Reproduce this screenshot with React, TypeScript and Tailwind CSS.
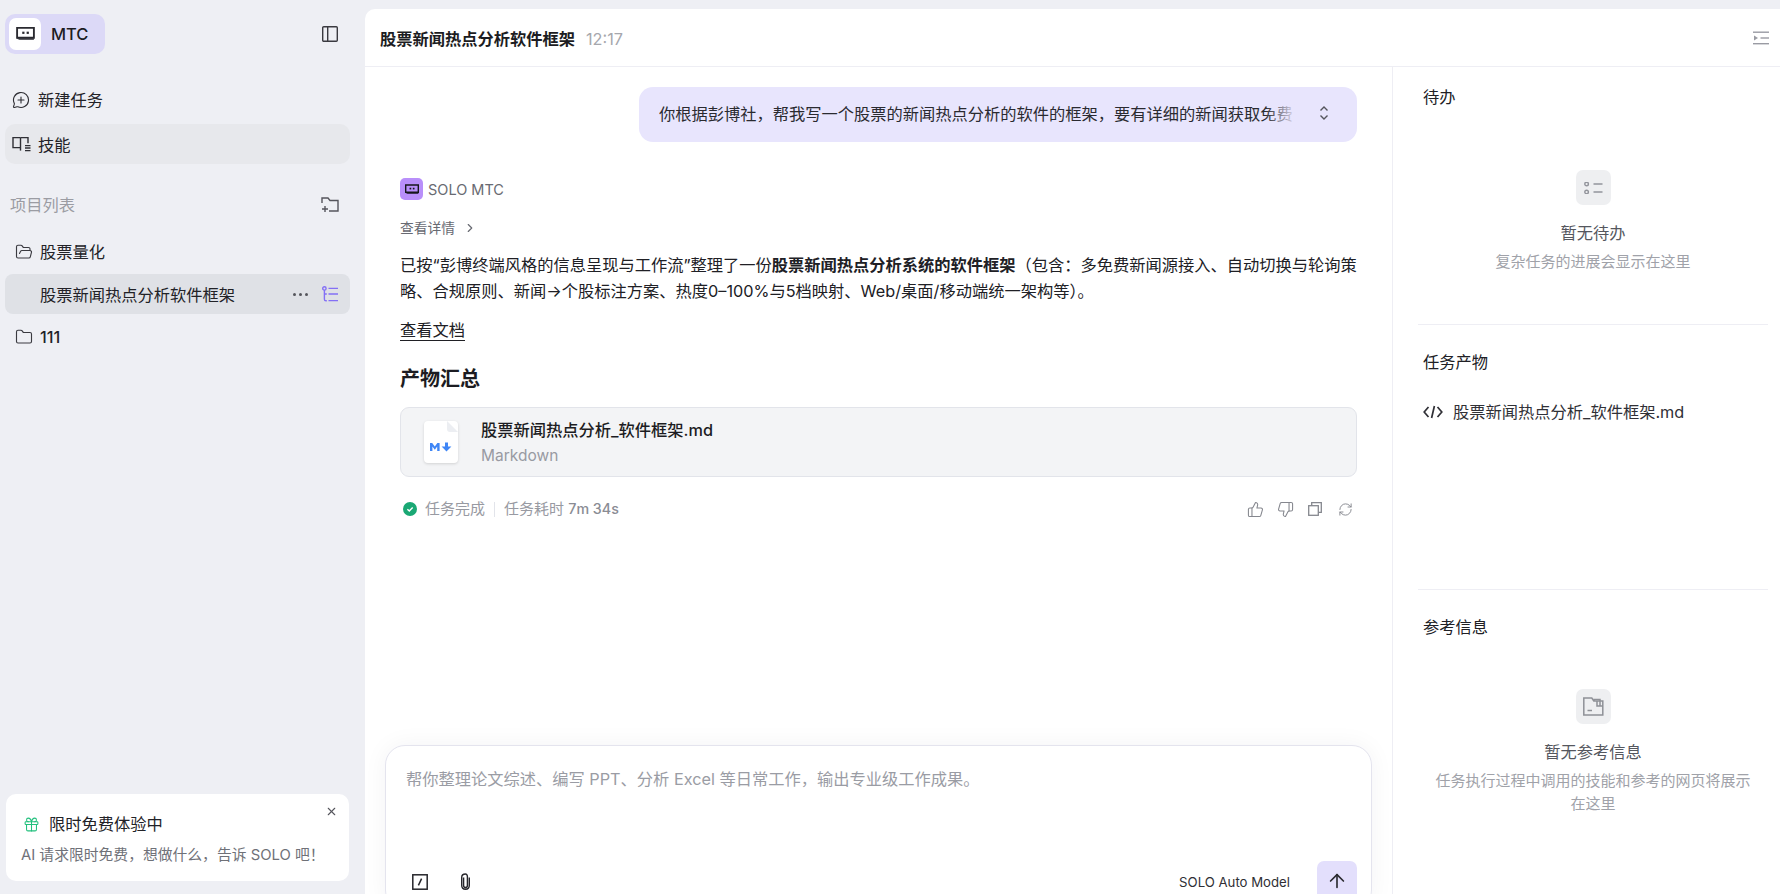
import {
  ArrowUp,
  ChevronRight,
  Folder,
  FolderOpen,
  Gift,
  MessageCirclePlus,
  RefreshCw,
  ThumbsDown,
  ThumbsUp,
  X,
} from "lucide-react";

/* ── Inline icons the packages don't have ── */

function RobotMark({ className }: { className?: string }) {
  return (
    <svg viewBox="0 0 20 15" className={className}>
      <path d="M1 1h18v10.5H1z" fill="none" stroke="currentColor" strokeWidth="2" />
      <path d="M1 11h18v3H3.5L1 12.5z" fill="currentColor" opacity="0.75" />
      <rect x="6.5" y="5" width="2.4" height="2.4" fill="currentColor" />
      <rect x="11.2" y="5" width="2.4" height="2.4" fill="currentColor" />
    </svg>
  );
}

function PanelIcon() {
  return (
    <svg viewBox="0 0 16 16" className="w-[16px] h-[16px] text-[#3a3a40]" fill="none" stroke="currentColor" strokeWidth="1.4">
      <rect x="0.7" y="0.7" width="14.6" height="14.6" rx="1" />
      <path d="M5.7 1v14" />
    </svg>
  );
}

function SkillIcon() {
  return (
    <svg viewBox="0 0 19 16" className="w-[19px] h-[16px] text-[#2f2f35]" fill="none" stroke="currentColor" strokeWidth="1.4">
      <path d="M8.5 1.6H1v10h7.5" />
      <path d="M8.5 1.6H16v5.6" />
      <path d="M8.5 1.6v13" />
      <path d="M13 9.6h5.5M13 12h5.5M13 14.6h5.5" />
    </svg>
  );
}

function FolderPlusIcon() {
  return (
    <svg viewBox="0 0 18 16" className="w-[18px] h-[16px] text-[#55555c]" fill="none" stroke="currentColor" strokeWidth="1.4">
      <path d="M1 6V1h6l2 2.5h8V14H8" />
      <path d="M4 9v6M1 12h6" />
    </svg>
  );
}

function TreeIcon() {
  return (
    <svg viewBox="0 0 16 16" className="w-[16px] h-[16px] text-[#8470f5]" fill="none" stroke="currentColor" strokeWidth="1.4">
      <circle cx="2.4" cy="2.4" r="1.7" />
      <path d="M2.4 4v9.2c0 1 .5 1.6 1.6 1.6h.8M2.4 8h2.4M6.5 2.4H16M6.5 8H16M6.5 14.6H16" />
    </svg>
  );
}

function CollapseIcon() {
  return (
    <svg viewBox="0 0 16 14" className="w-[16px] h-[14px] text-[#9a9ba3]" fill="currentColor">
      <rect x="0" y="0.5" width="16" height="1.4" />
      <path d="M1 4.5 5 7 1 9.5z" />
      <rect x="7.5" y="6.3" width="8.5" height="1.4" />
      <rect x="0" y="12" width="16" height="1.4" />
    </svg>
  );
}

function UpDownIcon() {
  return (
    <svg viewBox="0 0 10 14" className="w-[10px] h-[14px] text-[#55555c]" fill="none" stroke="currentColor" strokeWidth="1.4">
      <path d="m1.5 4.6 3.5-3.5 3.5 3.5M1.5 9.4 5 12.9l3.5-3.5" />
    </svg>
  );
}

function CopyIcon() {
  return (
    <svg viewBox="0 0 14 14" className="w-[14px] h-[14px]" fill="none" stroke="currentColor" strokeWidth="1.3">
      <rect x="0.7" y="3.7" width="9.6" height="9.6" />
      <path d="M3.7 3.7V.7h9.6v9.6h-3" />
    </svg>
  );
}

function CodeIcon() {
  return (
    <svg viewBox="0 0 20 14" className="w-[20px] h-[14px] text-[#303036]" fill="none" stroke="currentColor" strokeWidth="1.7">
      <path d="M5.5 2 1.2 7l4.3 5M14.5 2l4.3 5-4.3 5M11.4 1 8.6 13" />
    </svg>
  );
}

function TodoIcon() {
  return (
    <svg viewBox="0 0 19 12" className="w-[19px] h-[12px] text-[#93959c]" fill="none" stroke="currentColor" strokeWidth="1.4">
      <circle cx="2.6" cy="2" r="1.8" />
      <circle cx="2.6" cy="10" r="1.8" />
      <path d="M9.5 2h9M9.5 10h9" />
    </svg>
  );
}

function RefFolderIcon() {
  return (
    <svg viewBox="0 0 21 19" className="w-[21px] h-[19px] text-[#8f9197]" fill="none" stroke="currentColor" strokeWidth="1.5">
      <path d="M.8 18V1h8l2 3h9v14z" />
      <path d="M11 4V2.5h6V9M14 4v5h6" />
      <path d="M4.5 13.5h4.5" />
    </svg>
  );
}

function MarkdownFile() {
  return (
    <div className="w-[34px] h-[42px] rounded-[4px] bg-white shadow-[0_1px_3px_rgba(0,0,0,0.14)]">
      <svg viewBox="0 0 34 42" className="w-[34px] h-[42px]">
        <path d="M23 0 34 11H26a3 3 0 0 1-3-3z" fill="#eceef2" />
        <path d="M6 30v-8h2.2l2.6 3.6 2.6-3.6h2.2v8h-2.4v-4.4l-2.4 3.2-2.4-3.2V30z" fill="#3f86f6" />
        <path d="M21 21.5h3v4h3.4l-4.9 5-4.9-5H21z" fill="#3f86f6" />
      </svg>
    </div>
  );
}

function SlashIcon() {
  return (
    <svg viewBox="0 0 16 16" className="w-[16px] h-[16px] text-[#26262b]" fill="none" stroke="currentColor" strokeWidth="1.5">
      <rect x="0.8" y="0.8" width="14.4" height="14.4" />
      <path d="m9.6 4.6-3.2 6.8" />
    </svg>
  );
}

function ClipIcon() {
  return (
    <svg viewBox="0 0 13 17" className="w-[13px] h-[17px] text-[#26262b]" fill="none" stroke="currentColor" strokeWidth="1.4">
      <path d="M4.6 4.5v8c0 1.2.8 2 1.9 2s1.9-.8 1.9-2V3.6C8.4 2 7.4 1 6.5 1 4.8 1 2.7 2 2.7 4.5v7.8c0 2.6 1.6 4 3.8 4s3.8-1.4 3.8-4V4.5" />
    </svg>
  );
}

function CheckBadge() {
  return (
    <svg viewBox="0 0 14 14" className="w-[14px] h-[14px]">
      <circle cx="7" cy="7" r="7" fill="#1aa874" />
      <path d="m4.4 7.2 1.9 1.8 3.4-3.6" fill="none" stroke="#fff" strokeWidth="1.4" />
    </svg>
  );
}

/* ── Sidebar ── */

function Sidebar() {
  return (
    <aside className="w-[365px] shrink-0 h-full flex flex-col bg-[#eeeff4] text-[#222227]">
      <div className="flex items-center justify-between mt-[14px] pl-[5px] pr-[27px]">
        <div className="w-[100px] h-[40px] rounded-[10px] bg-[#dcd9f7] flex items-center pl-[4px] gap-[10px]">
          <div className="w-[32px] h-[32px] rounded-[7px] bg-white flex items-center justify-center">
            <RobotMark className="w-[19px] h-[14px] text-[#2a2a30]" />
          </div>
          <span className="text-[16.5px] font-medium text-[#1c1c22]">MTC</span>
        </div>
        <PanelIcon />
      </div>

      <nav className="mt-[26px] pl-[5px] pr-[15px] flex flex-col gap-[4px]">
        <div className="h-[40px] rounded-[10px] flex items-center pl-[7px] gap-[8px]">
          <MessageCirclePlus size={18} strokeWidth={1.5} className="text-[#2f2f35]" />
          <span>新建任务</span>
        </div>
        <div className="h-[40px] rounded-[10px] bg-[#e7e8ec] flex items-center pl-[7px] gap-[7px]">
          <SkillIcon />
          <span className="mt-[2px]">技能</span>
        </div>
      </nav>

      <div className="mt-[29px] h-[24px] flex items-center justify-between pl-[10px] pr-[26px]">
        <span className="text-[#9b9ca3]">项目列表</span>
        <FolderPlusIcon />
      </div>

      <div className="mt-[15px] pl-[5px] pr-[15px] flex flex-col">
        <div className="h-[40px] flex items-center pl-[10px] gap-[7px]">
          <FolderOpen size={18} strokeWidth={1.5} className="text-[#3a3a40]" />
          <span>股票量化</span>
        </div>
        <div className="mt-[2px] h-[40px] rounded-[8px] bg-[#dfe1e6] flex items-center justify-between pl-[35px] pr-[12px]">
          <span className="mt-[2px]">股票新闻热点分析软件框架</span>
          <div className="flex items-center gap-[14px]">
            <span className="flex gap-[2px]">
              <span className="w-[3px] h-[3px] rounded-full bg-[#55555c]" />
              <span className="w-[3px] h-[3px] rounded-full bg-[#55555c] mx-[1px]" />
              <span className="w-[3px] h-[3px] rounded-full bg-[#55555c]" />
            </span>
            <TreeIcon />
          </div>
        </div>
        <div className="mt-[3px] h-[40px] flex items-center pl-[10px] gap-[7px]">
          <Folder size={18} strokeWidth={1.5} className="text-[#3a3a40]" />
          <span className="font-medium">111</span>
        </div>
      </div>

      <div className="relative mt-auto mb-[13px] ml-[6px] w-[343px] h-[87px] rounded-[10px] bg-white px-[15px] pt-[18px]">
        <X size={13} strokeWidth={2} className="absolute top-[11px] right-[11px] text-[#55555c]" />
        <div className="flex items-center gap-[9px] pl-[2px] leading-[24px]">
          <Gift size={17} strokeWidth={1.5} className="text-[#22c07d]" />
          <span className="text-[#222227]">限时免费体验中</span>
        </div>
        <p className="mt-[8px] text-[14.8px] leading-[22px] text-[#6f7178]">AI 请求限时免费，想做什么，告诉 SOLO 吧！</p>
      </div>
    </aside>
  );
}

/* ── Chat column ── */

function Conversation() {
  return (
    <div className="px-[35px] pt-[20px]">
      <div className="relative h-[55px] ml-[239px] w-[718px] rounded-[14px] bg-[#e8e5fd] flex items-center pl-[20px] text-[#2a2a30]">
        <div className="w-[636px] overflow-hidden whitespace-nowrap">你根据彭博社，帮我写一个股票的新闻热点分析的软件的框架，要有详细的新闻获取免费</div>
        <div className="absolute left-[626px] top-[12px] w-[32px] h-[30px] bg-gradient-to-r from-transparent to-[#e8e5fd]" />
        <div className="ml-[24px] mb-[3px]">
          <UpDownIcon />
        </div>
      </div>

      <div className="mt-[36px] flex items-center gap-[5px] h-[22px]">
        <div className="w-[23px] h-[22px] rounded-[5px] bg-[#b98ffa] flex items-center justify-center">
          <RobotMark className="w-[14px] h-[11px] text-[#17171c]" />
        </div>
        <span className="mt-[2px] text-[14.5px] text-[#686a72]">SOLO MTC</span>
      </div>

      <div className="mt-[18px] h-[20px] flex items-center gap-[8px] text-[13.75px] text-[#686a72]">
        <span>查看详情</span>
        <ChevronRight size={14} strokeWidth={2} />
      </div>

      <p className="mt-[14px] leading-[26px] text-[#202025]">
        已按“彭博终端风格的信息呈现与工作流”整理了一份<strong className="font-bold">股票新闻热点分析系统的软件框架</strong>（包含：多免费新闻源接入、自动切换与轮询策略、合规原则、新闻→个股标注方案、热度0–100%与5档映射、Web/桌面/移动端统一架构等）。
      </p>

      <div className="mt-[13px] leading-[26px] text-[#202025] underline underline-offset-4">查看文档</div>

      <h2 className="mt-[21px] text-[20px] leading-[30px] font-bold text-[#1c1c22]">产物汇总</h2>

      <div className="mt-[13px] h-[70px] rounded-[9px] border border-[#e2e4ea] bg-[#f3f4f6] flex items-center pl-[23px]">
        <MarkdownFile />
        <div className="ml-[23px]">
          <div className="leading-[24px] font-medium text-[#1c1c22]">股票新闻热点分析_软件框架.md</div>
          <div className="mt-[3px] text-[15.5px] leading-[22px] text-[#989aa2]">Markdown</div>
        </div>
      </div>

      <div className="mt-[21px] h-[22px] flex items-center justify-between text-[15px] text-[#989aa2]">
        <div className="flex items-center pl-[3px]">
          <CheckBadge />
          <span className="ml-[8px]">任务完成</span>
          <span className="mx-[9px] w-px h-[15px] bg-[#e2e4ea]" />
          <span>任务耗时 <span className="text-[14.25px] font-medium text-[#8a8c94]">7m 34s</span></span>
        </div>
        <div className="flex items-center -mr-[3px] text-[#85878e]">
          <span className="w-[30px] flex justify-center"><ThumbsUp size={17} strokeWidth={1.5} /></span>
          <span className="w-[30px] flex justify-center"><ThumbsDown size={17} strokeWidth={1.5} /></span>
          <span className="w-[30px] flex justify-center"><CopyIcon /></span>
          <span className="w-[30px] flex justify-center"><RefreshCw size={15} strokeWidth={1.5} /></span>
        </div>
      </div>
    </div>
  );
}

function Composer() {
  return (
    <div className="mt-auto mb-[-16px] mx-[20px] h-[165px] shrink-0 rounded-[20px] border border-[#e4e4ee] bg-white shadow-[0_0_24px_rgba(30,30,60,0.05)] flex flex-col pl-[20px] pr-[14px] pt-[20px]">
      <p className="leading-[26px] text-[#9a9ca4]">帮你整理论文综述、编写 PPT、分析 Excel 等日常工作，输出专业级工作成果。</p>
      <div className="mt-[69px] flex items-start justify-between">
        <div className="flex items-center gap-[31px] pl-[6px] pt-[12px]">
          <SlashIcon />
          <ClipIcon />
        </div>
        <div className="flex items-center gap-[27px]">
          <span className="mt-[4px] text-[13.2px] text-[#2f2f35] whitespace-nowrap">SOLO Auto Model</span>
          <div className="w-[40px] h-[40px] rounded-[7px] bg-[#e3dffc] flex items-center justify-center">
            <ArrowUp size={22} strokeWidth={1.8} className="text-[#2a2a30]" />
          </div>
        </div>
      </div>
    </div>
  );
}

/* ── Right panel ── */

function EmptyBlock({ icon, title, children }: { icon: React.ReactNode; title: string; children: React.ReactNode }) {
  return (
    <div className="flex flex-col items-center pr-[5px]">
      <div className="w-[35px] h-[35px] rounded-[7px] bg-[#eeeff1] flex items-center justify-center">{icon}</div>
      <div className="mt-[16px] leading-[24px] text-[#55575e]">{title}</div>
      <div className="mt-[5px] w-[320px] text-center text-[15px] leading-[23px] text-[#a0a2a9]">{children}</div>
    </div>
  );
}

function RightPanel() {
  return (
    <aside className="w-[388px] shrink-0 border-l border-[#eeeef4] flex flex-col pr-[12px]">
      <section className="h-[257px] pl-[30px] pt-[18px]">
        <h3 className="leading-[24px] text-[#202025]">待办</h3>
        <div className="mt-[61px]">
          <EmptyBlock icon={<TodoIcon />} title="暂无待办">
            复杂任务的进展会显示在这里
          </EmptyBlock>
        </div>
      </section>

      <div className="ml-[25px] h-px bg-[#eeeef4]" />

      <section className="h-[264px] pl-[30px] pt-[25px]">
        <h3 className="leading-[24px] text-[#202025]">任务产物</h3>
        <div className="mt-[26px] flex items-center gap-[10px] leading-[24px] text-[#303036]">
          <CodeIcon />
          <span>股票新闻热点分析_软件框架.md</span>
        </div>
      </section>

      <div className="ml-[25px] h-px bg-[#eeeef4]" />

      <section className="flex-1 pl-[30px] pt-[25px]">
        <h3 className="leading-[24px] text-[#202025]">参考信息</h3>
        <div className="mt-[50px]">
          <EmptyBlock icon={<RefFolderIcon />} title="暂无参考信息">
            任务执行过程中调用的技能和参考的网页将展示在这里
          </EmptyBlock>
        </div>
      </section>
    </aside>
  );
}

export default function App() {
  return (
    <div className="w-[1780px] h-[894px] overflow-hidden flex bg-[#eeeff4] text-[16.25px] font-[Inter,'Noto_Sans_CJK_SC',sans-serif]">
      <Sidebar />
      <main className="flex-1 mt-[9px] rounded-tl-[10px] bg-white flex flex-col min-w-0">
        <header className="h-[58px] shrink-0 border-b border-[#eeeef4] flex items-center justify-between pl-[15px] pr-[11px]">
          <div className="flex items-center gap-[11px] mt-[3px]">
            <h1 className="font-bold text-[#1c1c22]">股票新闻热点分析软件框架</h1>
            <span className="text-[#a6a7ad]">12:17</span>
          </div>
          <CollapseIcon />
        </header>
        <div className="flex-1 flex min-h-0">
          <div className="flex-1 min-w-0 flex flex-col">
            <Conversation />
            <Composer />
          </div>
          <RightPanel />
        </div>
      </main>
    </div>
  );
}
